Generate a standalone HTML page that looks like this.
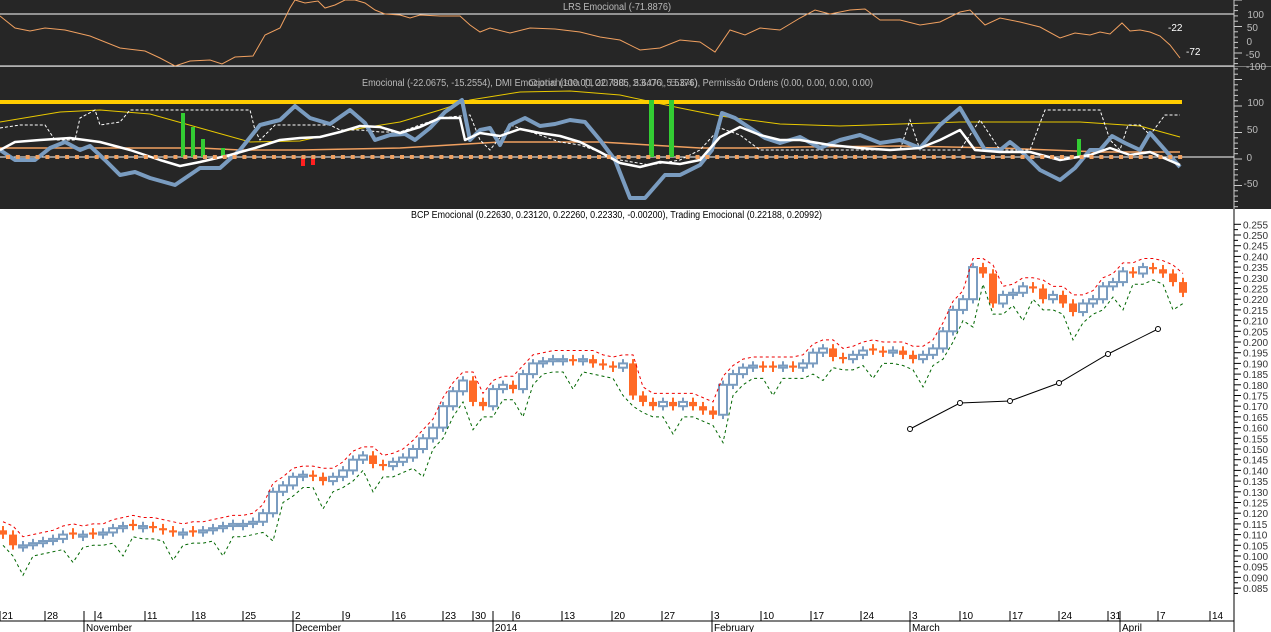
<!DOCTYPE html>
<html><head><meta charset="utf-8"><style>
html,body{margin:0;padding:0;background:#fff;}
svg{display:block;font-family:"Liberation Sans",sans-serif;}
</style></head><body>
<svg id="s" width="1271" height="632" xmlns="http://www.w3.org/2000/svg">
<rect x="0" y="0" width="1271" height="209" fill="#262626"/>
<rect x="0" y="209" width="1271" height="423" fill="#fff"/>
<line x1="0" y1="14" x2="1234" y2="14" stroke="#fff" stroke-width="1"/>
<line x1="0" y1="66" x2="1234" y2="66" stroke="#fff" stroke-width="1"/>
<text x="563" y="10" font-size="10" fill="#bbb" textLength="108" lengthAdjust="spacingAndGlyphs">LRS Emocional (-71.8876)</text>
<polyline fill="none" stroke="#f0a060" stroke-width="1" points="0,16 15,28 30,31 45,28 65,30 90,36 120,48 145,51 160,58 175,66 190,61 210,60 222,64 235,57 253,56 265,35 280,28 290,8 295,0 305,3 318,1 325,8 335,5 345,0 355,0 365,3 375,10 385,14 400,15 410,18 420,15 440,16 460,16 470,25 480,32 490,28 510,33 530,28 555,29 580,32 600,37 620,40 640,50 660,48 680,40 700,42 715,52 730,30 745,35 760,28 780,30 800,18 815,10 830,14 850,10 865,9 880,20 900,20 920,25 940,22 960,12 970,10 985,25 1000,18 1020,22 1040,27 1060,38 1075,33 1090,35 1100,32 1110,34 1122,23 1130,31 1140,30 1150,32 1160,36 1170,45 1180,58"/>
<text x="1168" y="31" font-size="10" fill="#fff">-22</text>
<text x="1186" y="55" font-size="10" fill="#fff">-72</text>
<g font-size="10" fill="#bbb" text-anchor="end">
<text x="1264" y="18">100</text><text x="1258" y="31">50</text><text x="1252" y="45">0</text><text x="1260" y="58">-50</text><text x="1266" y="70">-100</text>
</g>
<line x1="1234" y1="0" x2="1234" y2="209" stroke="#ccc"/>
<line x1="0" y1="66.5" x2="1271" y2="66.5" stroke="#ccc" stroke-width="0.5"/>
<text x="362" y="86" font-size="10" fill="#bbb" textLength="511" lengthAdjust="spacingAndGlyphs">Emocional (-22.0675, -15.2554), DMI Emocional (100.00, 22.7885, 5.6476, 5.5376), Permissão Ordens (0.00, 0.00, 0.00, 0.00)</text>
<text x="528" y="86" font-size="10" fill="#bbb" opacity="0.7" textLength="170" lengthAdjust="spacingAndGlyphs">Optimista (100.00, 23.00, 5.64)</text>
<line x1="0" y1="157" x2="1234" y2="157" stroke="#fff"/>
<polyline fill="none" stroke="#e8c800" stroke-width="1" points="0,122 60,112 100,110 150,114 200,128 250,142 300,141 350,130 400,122 440,110 470,100 520,92 570,91 620,95 680,108 720,116 780,124 840,126 900,124 960,122 1020,122 1080,122 1140,126 1180,137"/>
<polyline fill="none" stroke="#f0a060" stroke-width="1.5" points="0,148 200,148 240,150 300,150 400,148 450,145 500,142 600,142 700,148 750,148 800,147 900,146 1000,148 1100,152 1180,152"/>
<polyline fill="none" stroke="#fff" stroke-width="1" stroke-dasharray="3,2" points="0,128 20,125 45,125 55,140 75,140 80,118 95,110 100,125 120,122 130,110 200,110 250,110 255,130 260,140 275,125 300,125 330,125 340,130 360,130 380,132 400,132 440,118 470,115 480,140 490,150 510,125 525,130 560,142 580,145 600,152 620,160 650,165 680,160 700,150 720,128 740,135 760,150 780,150 840,150 900,150 910,120 920,150 960,150 980,120 1000,150 1030,150 1045,110 1070,110 1100,110 1110,140 1120,150 1128,125 1140,125 1150,135 1165,115 1180,115"/>
<line x1="0" y1="102" x2="1182" y2="102" stroke="#ffcc00" stroke-width="4"/>
<g fill="#33cc33"><rect x="181" y="113" width="4" height="44"/><rect x="191" y="127" width="4" height="30"/><rect x="201" y="139" width="4" height="18"/><rect x="221" y="148" width="4" height="9"/><rect x="649" y="100" width="5" height="57"/><rect x="669" y="100" width="5" height="57"/><rect x="1077" y="139" width="4" height="18"/></g>
<g fill="#ff2020"><rect x="301" y="157" width="4" height="9"/><rect x="311" y="157" width="4" height="8"/></g>
<polyline fill="none" stroke="#7a9cc0" stroke-width="4" stroke-linejoin="round" points="0,150 15,160 35,160 50,148 65,142 80,150 90,146 105,160 120,175 135,172 150,178 175,185 200,168 220,168 240,150 260,125 280,120 295,106 310,118 330,124 350,110 365,123 375,140 390,135 405,134 415,140 430,128 445,112 462,100 470,140 480,130 490,128 500,145 510,125 525,118 540,126 555,124 570,120 585,122 600,140 615,160 630,198 645,198 665,175 680,175 700,165 712,150 722,113 735,118 750,128 765,138 780,143 800,137 820,148 840,140 860,135 880,143 900,140 920,148 940,125 960,108 970,125 985,150 1000,150 1010,142 1020,150 1040,170 1060,180 1075,168 1090,150 1100,150 1112,136 1125,143 1140,150 1150,133 1165,150 1180,167"/>
<polyline fill="none" stroke="#fff" stroke-width="2.5" stroke-linejoin="round" points="0,150 15,142 40,140 70,138 100,142 130,150 160,160 180,166 200,162 230,155 255,148 280,140 300,138 320,137 340,132 360,126 380,127 400,133 420,127 440,118 460,118 465,140 480,133 500,136 520,129 540,133 560,136 580,142 600,152 620,163 640,167 660,162 680,164 700,160 720,137 740,127 760,135 780,140 800,140 830,145 860,148 890,150 920,148 940,140 960,130 975,150 1000,152 1030,152 1060,160 1090,155 1110,148 1130,155 1150,152 1180,165"/>
<g id="dots" fill="#f0a060"></g>
<g font-size="10" fill="#bbb" text-anchor="end">
<text x="1264" y="106">100</text><text x="1258" y="133">50</text><text x="1252" y="161">0</text><text x="1258" y="187">-50</text>
</g>
<g id="ticks" stroke="#ccc"></g>
<text x="411" y="218" font-size="10" fill="#000" textLength="411" lengthAdjust="spacingAndGlyphs">BCP Emocional (0.22630, 0.23120, 0.22260, 0.22330, -0.00200), Trading Emocional (0.22188, 0.20992)</text>
<line x1="1234" y1="209" x2="1234" y2="632" stroke="#000"/>
<g id="plab" font-size="10" fill="#333"></g>
<g id="cand"></g>
<polyline fill="none" stroke="#000" stroke-width="1" points="910,429 960,403 1010,401 1059,383 1108,354 1158,329"/>
<g fill="#fff" stroke="#000"><circle cx="910" cy="429" r="2.5"/><circle cx="960" cy="403" r="2.5"/><circle cx="1010" cy="401" r="2.5"/><circle cx="1059" cy="383" r="2.5"/><circle cx="1108" cy="354" r="2.5"/><circle cx="1158" cy="329" r="2.5"/></g>
<line x1="0" y1="621" x2="1234" y2="621" stroke="#000"/>
<g id="xt" stroke="#000"></g>
<g font-size="10" fill="#000">
<text x="2" y="619">21</text><text x="47" y="619">28</text><text x="97" y="619">4</text><text x="147" y="619">11</text><text x="195" y="619">18</text><text x="245" y="619">25</text><text x="295" y="619">2</text><text x="345" y="619">9</text><text x="395" y="619">16</text><text x="445" y="619">23</text><text x="475" y="619">30</text><text x="515" y="619">6</text><text x="564" y="619">13</text><text x="614" y="619">20</text><text x="664" y="619">27</text><text x="714" y="619">3</text><text x="763" y="619">10</text><text x="813" y="619">17</text><text x="863" y="619">24</text><text x="912" y="619">3</text><text x="962" y="619">10</text><text x="1012" y="619">17</text><text x="1061" y="619">24</text><text x="1110" y="619">31</text><text x="1160" y="619">7</text><text x="1212" y="619">14</text>
<text x="86" y="631">November</text><text x="295" y="631">December</text><text x="495" y="631">2014</text><text x="714" y="631">February</text><text x="912" y="631">March</text><text x="1122" y="631">April</text>
</g>
<g stroke="#000"><line x1="84" y1="611" x2="84" y2="632"/><line x1="293" y1="611" x2="293" y2="632"/><line x1="493" y1="611" x2="493" y2="632"/><line x1="712" y1="611" x2="712" y2="632"/><line x1="910" y1="611" x2="910" y2="632"/><line x1="1120" y1="611" x2="1120" y2="632"/></g>
</svg>
<script>
(function(){
var NS="http://www.w3.org/2000/svg";
function el(p,t,a){var e=document.createElementNS(NS,t);for(var k in a)e.setAttribute(k,a[k]);p.appendChild(e);return e;}
var s=document.getElementById('s');
var dots=document.getElementById('dots');
for(var x=8;x<1182;x+=9.85){el(dots,'rect',{x:x-2,y:155,width:4,height:4});}
var tk=document.getElementById('ticks');
for(var y=0;y<209;y+=5.3){el(tk,'line',{x1:1234,y1:y,x2:(Math.round(y/5.3)%5==0?1242:1238),y2:y});}
var Y=function(p){return 342-(p-0.2)*2140;};
var pl=document.getElementById('plab');
for(var i=0;i<=34;i++){var p=0.255-i*0.005;var yy=Y(p);el(pl,'line',{x1:1234,y1:yy,x2:1241,y2:yy,stroke:'#000'});el(pl,'line',{x1:1234,y1:yy+5.35,x2:1238,y2:yy+5.35,stroke:'#000'});var t=el(pl,'text',{x:1243,y:yy+4});t.textContent=p.toFixed(3);}
var xt=document.getElementById('xt');
[0,45,95,145,193,243,293,343,393,443,473,513,562,612,662,712,761,811,861,910,960,1010,1059,1108,1158,1210].forEach(function(x){el(xt,'line',{x1:x,y1:611,x2:x,y2:621});});
var c=[0.110,0.105,0.105,0.106,0.107,0.108,0.110,0.110,0.110,0.110,0.111,0.113,0.114,0.114,0.114,0.113,0.112,0.111,0.111,0.111,0.112,0.113,0.114,0.115,0.115,0.116,0.120,0.130,0.133,0.137,0.138,0.137,0.135,0.137,0.140,0.145,0.147,0.143,0.142,0.144,0.146,0.150,0.155,0.160,0.170,0.177,0.182,0.172,0.170,0.178,0.180,0.178,0.185,0.190,0.191,0.192,0.192,0.191,0.192,0.190,0.189,0.188,0.190,0.175,0.172,0.170,0.172,0.170,0.172,0.170,0.168,0.166,0.180,0.185,0.188,0.189,0.188,0.188,0.189,0.188,0.190,0.195,0.197,0.193,0.192,0.194,0.196,0.196,0.195,0.196,0.194,0.192,0.194,0.197,0.205,0.215,0.220,0.235,0.232,0.218,0.222,0.223,0.226,0.225,0.220,0.222,0.218,0.214,0.218,0.220,0.226,0.228,0.233,0.232,0.235,0.234,0.232,0.228,0.223];
var cg=document.getElementById('cand');
var up=[],lo=[];
for(var i=0;i<c.length;i++){var x=i*10+3,o=i?c[i-1]:c[0]+0.002,cl=c[i];
 if(Math.abs(o-cl)<0.0008)o=cl+(i%2?0.001:-0.001);
 var hi=Math.max(o,cl)+0.002,lw=Math.min(o,cl)-0.002;
 up.push(x+','+Y(hi+0.002));lo.push(x+','+Y(lw-0.003-(i%5==2?0.008:0)));
 var isUp=cl>=o,col=isUp?'#7a9cc0':'#ff6a26';
 el(cg,'line',{x1:x,y1:Y(hi),x2:x,y2:Y(lw),stroke:col,'stroke-width':2});
 var bt=Y(Math.max(o,cl)),h=Math.max(2,Y(Math.min(o,cl))-bt);
 if(isUp)el(cg,'rect',{x:x-4,y:bt,width:8,height:h,fill:'#fff',stroke:col,'stroke-width':2});
 else el(cg,'rect',{x:x-4,y:bt,width:8,height:h,fill:col});}
el(s,'polyline',{points:up.join(' '),fill:'none',stroke:'#e00','stroke-width':1,'stroke-dasharray':'3,3'});
el(s,'polyline',{points:lo.join(' '),fill:'none',stroke:'#060','stroke-width':1,'stroke-dasharray':'3,3'});
})();
</script>
</body></html>
